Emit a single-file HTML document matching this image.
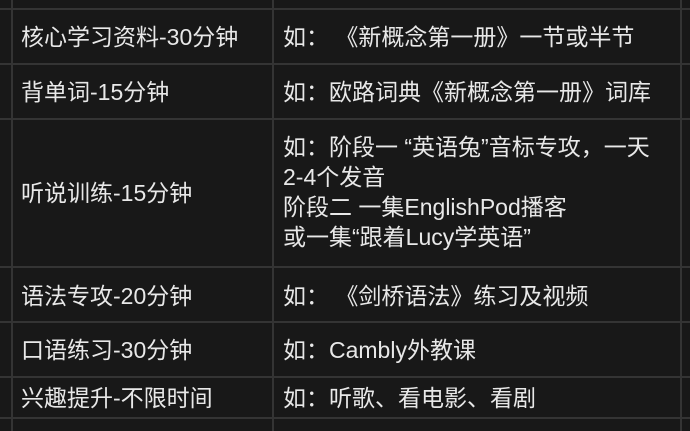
<html><head><style>
body{margin:0;width:690px;height:431px;background:#181818;overflow:hidden;position:relative;font-family:"Liberation Sans","Noto Sans CJK SC",sans-serif;color:#e8e8e8;font-size:23px}
.h{position:absolute;left:0;width:690px;height:2px;background:#343434}
.v{position:absolute;top:0;height:431px;width:2px;background:#343434}
.t{position:absolute;white-space:nowrap;line-height:30px}
</style></head><body>
<div class="h" style="top:8px"></div><div class="h" style="top:63px"></div><div class="h" style="top:118px"></div><div class="h" style="top:266px"></div><div class="h" style="top:321px"></div><div class="h" style="top:376px"></div><div class="h" style="top:417px"></div>
<div class="v" style="left:11px"></div><div class="v" style="left:272px"></div><div class="v" style="left:680px"></div>
<div class="t" style="left:21px;top:22px">核心学习资料-30分钟</div>
<div class="t" style="left:283px;top:22px">如：&nbsp;《新概念第一册》一节或半节</div>
<div class="t" style="left:21px;top:77px">背单词-15分钟</div>
<div class="t" style="left:283px;top:77px">如：欧路词典《新概念第一册》词库</div>
<div class="t" style="left:21px;top:178px">听说训练-15分钟</div>
<div class="t" style="left:283px;top:132px">如：阶段一 “英语兔”音标专攻，一天<br>2-4个发音<br>阶段二 一集EnglishPod播客<br>或一集“跟着Lucy学英语”</div>
<div class="t" style="left:21px;top:281px">语法专攻-20分钟</div>
<div class="t" style="left:283px;top:281px">如：&nbsp;《剑桥语法》练习及视频</div>
<div class="t" style="left:21px;top:335px">口语练习-30分钟</div>
<div class="t" style="left:283px;top:335px">如：Cambly外教课</div>
<div class="t" style="left:21px;top:383px">兴趣提升-不限时间</div>
<div class="t" style="left:283px;top:383px">如：听歌、看电影、看剧</div>
</body></html>
